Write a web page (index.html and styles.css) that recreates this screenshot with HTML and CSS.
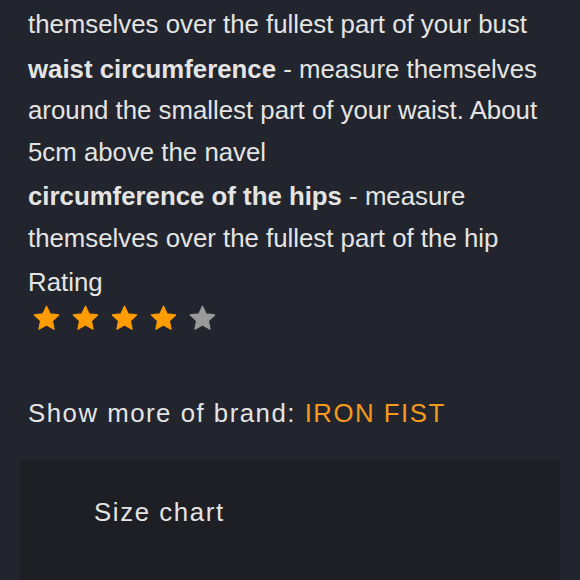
FILE: index.html
```html
<!DOCTYPE html>
<html>
<head>
<meta charset="utf-8">
<link rel="stylesheet" href="styles.css">
</head>
<body>
<div class="content">
  <p class="para">themselves over the fullest part of your bust</p>
  <p class="para"><b>waist circumference</b> - measure themselves around the smallest part of your waist. About 5cm above the navel</p>
  <p class="para"><b>circumference of the hips</b> - measure themselves over the fullest part of the hip</p>
  <div class="rating-label">Rating</div>
  <div class="stars">
    <svg class="star on" viewBox="0 0 24 24"><path d="M12 1.8l3.05 6.4 7 .85-5.15 4.85 1.35 6.95L12 17.4l-6.25 3.45 1.35-6.95L1.95 9.05l7-.85z"/></svg>
    <svg class="star on" viewBox="0 0 24 24"><path d="M12 1.8l3.05 6.4 7 .85-5.15 4.85 1.35 6.95L12 17.4l-6.25 3.45 1.35-6.95L1.95 9.05l7-.85z"/></svg>
    <svg class="star on" viewBox="0 0 24 24"><path d="M12 1.8l3.05 6.4 7 .85-5.15 4.85 1.35 6.95L12 17.4l-6.25 3.45 1.35-6.95L1.95 9.05l7-.85z"/></svg>
    <svg class="star on" viewBox="0 0 24 24"><path d="M12 1.8l3.05 6.4 7 .85-5.15 4.85 1.35 6.95L12 17.4l-6.25 3.45 1.35-6.95L1.95 9.05l7-.85z"/></svg>
    <svg class="star off" viewBox="0 0 24 24"><path d="M12 1.8l3.05 6.4 7 .85-5.15 4.85 1.35 6.95L12 17.4l-6.25 3.45 1.35-6.95L1.95 9.05l7-.85z"/></svg>
  </div>
  <div class="brand">Show more of brand: <span class="brand-name">IRON FIST</span></div>
</div>
<div class="box">
  <div class="box-title">Size chart</div>
</div>
</body>
</html>
```
FILE: styles.css
```css
html, body {
  margin: 0;
  padding: 0;
  background: #22252d;
  height: 100%;
  overflow: hidden;
}
body {
  font-family: "Liberation Sans", Arial, sans-serif;
  color: #e4e4e4;
  font-size: 25.8px;
}
.content {
  padding: 4px 28px 0;
}
.para {
  margin: 0 0 3px;
  line-height: 41.5px;
}
.para b {
  font-weight: bold;
}
.rating-label {
  line-height: 41.5px;
}
.stars {
  display: flex;
  gap: 10px;
  padding-left: 4px;
  height: 30px;
  align-items: center;
}
.star {
  width: 29px;
  height: 29px;
}
.star.on path {
  fill: #ff9c00;
  stroke: #ff9c00;
  stroke-width: 1;
  stroke-linejoin: round;
}
.star.off path {
  fill: #9a9a9a;
  stroke: #9a9a9a;
  stroke-width: 1;
  stroke-linejoin: round;
}
.brand {
  margin-top: 64px;
  letter-spacing: 1.5px;
  line-height: 30px;
}
.brand-name {
  color: #f49a1c;
}
.box {
  margin: 32px 20px 0;
  background: #1d1f24;
  height: 120px;
  padding: 37px 0 0 74px;
  box-sizing: border-box;
}
.box-title {
  letter-spacing: 1.6px;
  line-height: 30px;
}
```
